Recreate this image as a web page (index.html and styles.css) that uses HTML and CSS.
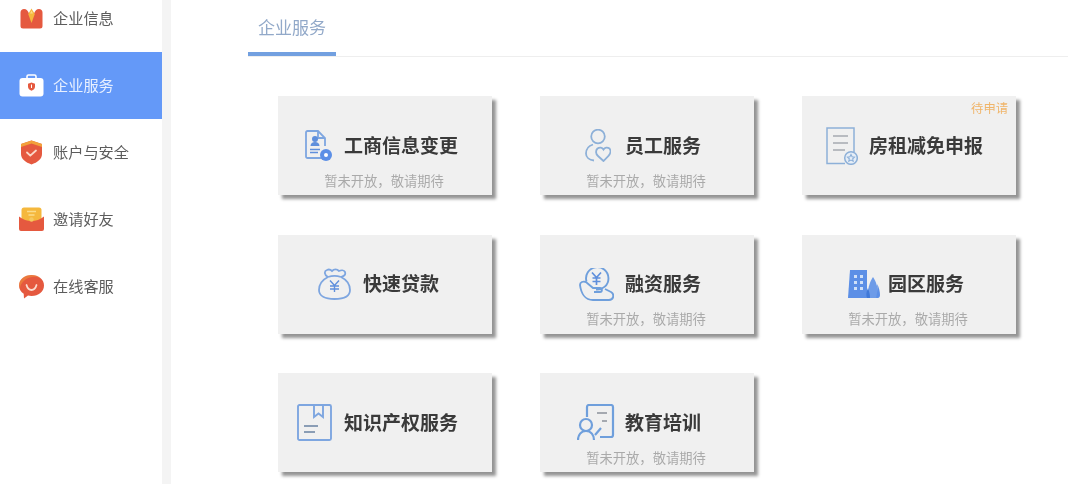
FILE: index.html
```html
<!DOCTYPE html>
<html lang="zh-CN">
<head>
<meta charset="utf-8">
<title>企业服务</title>
<link rel="stylesheet" href="styles.css">
</head>
<body>
<aside class="sidebar">
  <nav class="nav">
    <a class="nav-item">
      <svg class="nav-icon" viewBox="0 0 25 25"><path d="M1.500 6.500C1.500 4.500 3 3 5 3c2.500 0 4 2 5 4.500l2.500 5.500 2.500-5.500C16 5 17.500 3 20 3c2 0 3.500 1.500 3.500 3.500V20a2.500 2.500 0 0 1-2.500 2.500H4A2.500 2.500 0 0 1 1.500 20z" fill="#e5593f"/><path d="M12.500 2.500 15.800 8l-3.300 9L9.200 8z" fill="#f5b83d"/><path d="M12.500 4.500 14 7.500h-3z" fill="#fbdc8a"/></svg>
      <span>企业信息</span>
    </a>
    <a class="nav-item nav-item-active">
      <svg class="nav-icon" viewBox="0 0 25 25"><path d="M8 5V3.500A1.500 1.500 0 0 1 9.500 2h6A1.500 1.500 0 0 1 17 3.500V5" fill="none" stroke="#fff" stroke-width="1.600"/><rect x="0.500" y="5" width="24" height="18.500" rx="3" fill="#fff"/><path d="M12.500 9.500 16 10.800v3c0 2-1.500 3.300-3.500 4-2-.7-3.500-2-3.500-4v-3z" fill="#e5593f"/><rect x="12" y="11.500" width="1" height="3.500" fill="#fff"/></svg>
      <span>企业服务</span>
    </a>
    <a class="nav-item">
      <svg class="nav-icon" viewBox="0 0 25 25"><path d="M12.500 0.500 23 4v10c0 5-4.500 8.300-10.500 10.500C6.500 22.300 2 19 2 14V4z" fill="#e5593f"/><path d="M12.500 0.500 23 4v3L12.500 3.500 2 7V4z" fill="#f2a13b"/><path d="m8 12.500 3.300 3.200 5.700-5.200" fill="none" stroke="#fbd9c8" stroke-width="1.800" stroke-linecap="round" stroke-linejoin="round"/></svg>
      <span>账户与安全</span>
    </a>
    <a class="nav-item">
      <svg class="nav-icon" viewBox="0 0 25 25"><rect x="2.500" y="0.500" width="20" height="15" rx="2.500" fill="#f5b83d"/><path d="M8 4.500h9M9.500 8h6" stroke="#fbdc8a" stroke-width="1.400"/><path d="M0 9.500C4 12.500 8 14 12.500 14S21 12.500 25 9.500V22a2 2 0 0 1-2 2H2a2 2 0 0 1-2-2z" fill="#e5593f"/><circle cx="12.500" cy="12.500" r="2.200" fill="#f5c95f"/></svg>
      <span>邀请好友</span>
    </a>
    <a class="nav-item">
      <svg class="nav-icon" viewBox="0 0 25 25"><path d="M12.500 1C19.500 1 25 5.500 25 11.500S19.500 22 12.500 22c-1.200 0-2.400-.1-3.500-.4L5 24.500l-.3-4.700C1.900 17.900 0 15 0 11.500 0 5.500 5.500 1 12.500 1z" fill="#e5593f"/><path d="M0 11.500C0 5.500 5.500 1 12.500 1c4 0 7.500 1.400 9.800 3.800C19.500 3 16 2.500 13 3 7 4 2 8 1 14z" fill="#f2a13b" opacity=".45"/><path d="M7.500 11c1 3.500 3 5 5 5s4-1.500 5-5" fill="none" stroke="#fbdccf" stroke-width="1.800" stroke-linecap="round"/></svg>
      <span>在线客服</span>
    </a>
  </nav>
</aside>
<main class="main">
  <div class="tabs"><div class="tab">企业服务</div></div>
  <section class="grid">
    <article class="card c1">
      <div class="head">
        <svg class="icon" viewBox="0 0 28 32"><path d="M20 28H3.500A1.500 1.500 0 0 1 2 26.500v-24A1.500 1.500 0 0 1 3.500 1H14l7 7v8" fill="none" stroke="#7ea6e0" stroke-width="1.800"/><path d="M14 1v7h7" fill="none" stroke="#7ea6e0" stroke-width="1.800"/><circle cx="11" cy="9" r="3" fill="#5f8fdc"/><path d="M6.500 16c0-2.500 2-4 4.500-4s4.500 1.500 4.500 4z" fill="#5f8fdc"/><path d="M6 19.500h10M6 22.500h8" stroke="#5f8fdc" stroke-width="1.500"/><circle cx="22" cy="25" r="6" fill="#5c8fe6"/><circle cx="22" cy="25" r="2" fill="#fff"/></svg>
        <h2 class="title">工商信息变更</h2>
      </div>
      <p class="sub">暂未开放，敬请期待</p>
    </article>
    <article class="card c2">
      <div class="head">
        <svg class="icon" viewBox="0 0 26 33" fill="none" stroke="#8db0d8" stroke-width="1.800"><circle cx="13" cy="7.500" r="6.800"/><path d="M8 15.500C3.500 17 1 20.500 1 24.500c0 3.500 3 6.500 8 7"/><path d="M18.500 32l-5.500-5c-2.500-2.300-2.500-5.500-.5-7.500 2-1.500 4.700-1.200 6 1 1.300-2.200 4-2.500 6-1 1.500 2 1 5.200-1 7.300z"/></svg>
        <h2 class="title">员工服务</h2>
      </div>
      <p class="sub">暂未开放，敬请期待</p>
    </article>
    <article class="card c3">
      <span class="tag">待申请</span>
      <div class="head">
        <svg class="icon" viewBox="0 0 32 38" fill="none" stroke="#8db0d8" stroke-width="1.500"><path d="M19 36.500H1V1h27v24"/><path d="M7 9h15M7 16h15M7 23h12" stroke="#a5a9b0"/><circle cx="25" cy="31" r="6.300" fill="#e6eef7"/><path d="m25 27.500 1.100 2.300 2.400.3-1.800 1.700.5 2.500-2.200-1.200-2.200 1.200.5-2.500-1.800-1.700 2.400-.3z" stroke-width="1.100"/></svg>
        <h2 class="title">房租减免申报</h2>
      </div>
    </article>
    <article class="card c4">
      <div class="head">
        <svg class="icon" viewBox="0 0 33 32" fill="none" stroke="#7ea6e0" stroke-width="1.800"><path d="M10 9C6 7 6 3 9 2c2-1 4 0 5 1 2-2 5-2 7 0 2-1 5-1 6 1 1 3-1 4-4 5"/><path d="M10 9c4-1.500 9-1.500 13 0"/><path d="M10 9C4 12 1 17 1 22c0 6 6 9 15.500 9S32 28 32 22c0-5-3-10-9-13"/><path d="m12 12.500 4.500 5 4.500-5M16.500 17.500V24M12 18h9M12 21h9" stroke="#5f8fdc" stroke-width="1.400"/></svg>
        <h2 class="title">快速贷款</h2>
      </div>
    </article>
    <article class="card c5">
      <div class="head">
        <svg class="icon" viewBox="0 0 35 33" fill="none" stroke="#6f9fdc" stroke-width="1.900"><path d="M7.500 13.500A11.200 11.200 0 1 1 17 21.500"/><path d="m13 4.500 4.500 5 4.500-5M17.500 9.500V17M13.500 10h8M13.500 13.500h8" stroke-width="1.700" stroke="#5f8fdc"/><path d="M1 17c0-3 3-4 6-3l7 6h7c2.500 0 2.500 4 0 4h-6"/><path d="M1 17c1 8 5 15 13 15h16c5 0 5.500-6 2-8l-6-3"/></svg>
        <h2 class="title">融资服务</h2>
      </div>
      <p class="sub">暂未开放，敬请期待</p>
    </article>
    <article class="card c6">
      <div class="head">
        <svg class="icon" viewBox="0 0 32 30"><path d="M0 29 2 1h17v28z" fill="#5c8fe6"/><path d="M6 6h3v3H6zm6 0h3v3h-3zM6 12h3v3H6zm6 0h3v3h-3zM6 18h3v3H6zm6 0h3v3h-3z" fill="#cfe0f8"/><path d="M25 8c3 4 5 11 5 16 0 3-1 5-2 5h-6c-1 0-2-2-2-5 0-5 2-12 5-16z" fill="#6d9be8"/><path d="M29 15c2 3 3 8 3 11 0 2-1 3-2 3h-2c1-4 2-9 1-14z" fill="#5c8fe6"/><path d="M19 29c-1-2-1-6 1-10 1 3 2 6 2 10z" fill="#3f78d8"/></svg>
        <h2 class="title">园区服务</h2>
      </div>
      <p class="sub">暂未开放，敬请期待</p>
    </article>
    <article class="card c7">
      <div class="head">
        <svg class="icon" viewBox="0 0 35 37" fill="none" stroke="#7ea6e0" stroke-width="1.900"><rect x="1" y="1" width="33" height="35" rx="1.500"/><path d="M17 1v12l4.500-3.500L26 13V1"/><path d="M7 22h14M7 28h11" stroke="#8a9db5"/></svg>
        <h2 class="title">知识产权服务</h2>
      </div>
    </article>
    <article class="card c8">
      <div class="head">
        <svg class="icon" viewBox="0 0 38 37" fill="none" stroke="#6f9fdc" stroke-width="2.200"><path d="M10 13V3a2 2 0 0 1 2-2h22a2 2 0 0 1 2 2v28a2 2 0 0 1-2 2H23"/><path d="M20 9h10M25 17h5" stroke="#a5a9b0"/><circle cx="9" cy="21" r="6"/><path d="M1 36c0-5 3-9 8-9s8 4 8 9M18 31l6-7"/></svg>
        <h2 class="title">教育培训</h2>
      </div>
      <p class="sub">暂未开放，敬请期待</p>
    </article>
  </section>
</main>
</body>
</html>
```

FILE: styles.css
```css
* { box-sizing: border-box; }
html, body { margin: 0; height: 484px; overflow: hidden; }
body {
  display: flex;
  background: #fff;
  font-family: "Noto Sans CJK SC", "Noto Sans", sans-serif;
}
.sidebar {
  flex: 0 0 171px;
  height: 484px;
  background: #fff;
  border-right: 9px solid #f4f4f4;
}
.nav { margin-top: -15px; filter: blur(.3px); }
.nav-item {
  display: flex;
  align-items: center;
  gap: 9px;
  height: 67px;
  padding-left: 19px;
  font-size: 15.2px;
  color: #5c5c5c;
}
.nav-item span { padding-bottom: 4px; }
.nav-item-active { background: #6499f8; color: #e8f0ff; }
.nav-icon { flex: none; width: 25px; height: 25px; }
.main { flex: 1; min-width: 0; padding: 0 12px 0 77px; filter: blur(.3px); }
.tabs { height: 57px; border-bottom: 1px solid #eee; }
.tab {
  width: 88px;
  height: 56px;
  padding-top: 15px;
  border-bottom: 4px solid #72a0e0;
  text-align: center;
  font-size: 17px;
  line-height: 24px;
  color: #92a9c9;
}
.grid {
  display: grid;
  grid-template-columns: repeat(3, 214px);
  grid-auto-rows: 99px;
  column-gap: 48px;
  row-gap: 39.5px;
  margin-top: 39px;
  padding-left: 30px;
}
.card {
  position: relative;
  padding-top: 33px;
  background: #f0f0f0;
  box-shadow: 4px 4px 3px rgba(0, 0, 0, .42);
}
.head {
  display: flex;
  align-items: center;
  justify-content: center;
  height: 33px;
  padding-right: var(--pr);
  gap: var(--gap);
}
.icon { flex: none; width: var(--w); height: var(--h); }
.title {
  margin: 0;
  padding-bottom: 3px;
  font-size: 19px;
  font-weight: 700;
  line-height: 33px;
  color: #3a3a3a;
  white-space: nowrap;
}
.sub {
  margin: 8.5px 0 0;
  padding-right: 2px;
  text-align: center;
  font-size: 13.3px;
  line-height: 20px;
  color: #aaa;
}
.tag {
  position: absolute;
  top: 4px;
  right: 8px;
  font-size: 12.3px;
  line-height: 16px;
  color: #f0b56a;
}
.c1 { --pr: 8px; --gap: 12px; --w: 28px; --h: 32px; }
.c2 { --pr: 8px; --gap: 14px; --w: 26px; --h: 33px; }
.c3 { --pr: 9px; --gap: 11px; --w: 32px; --h: 38px; }
.c4 { --pr: 13px; --gap: 12px; --w: 33px; --h: 32px; }
.c5 { --pr: 14px; --gap: 11px; --w: 35px; --h: 33px; }
.c6 { --pr: 6px; --gap: 8px; --w: 32px; --h: 30px; }
.c7 { --pr: 15px; --gap: 12px; --w: 35px; --h: 37px; }
.c8 { --pr: 16px; --gap: 10px; --w: 38px; --h: 37px; }
```
